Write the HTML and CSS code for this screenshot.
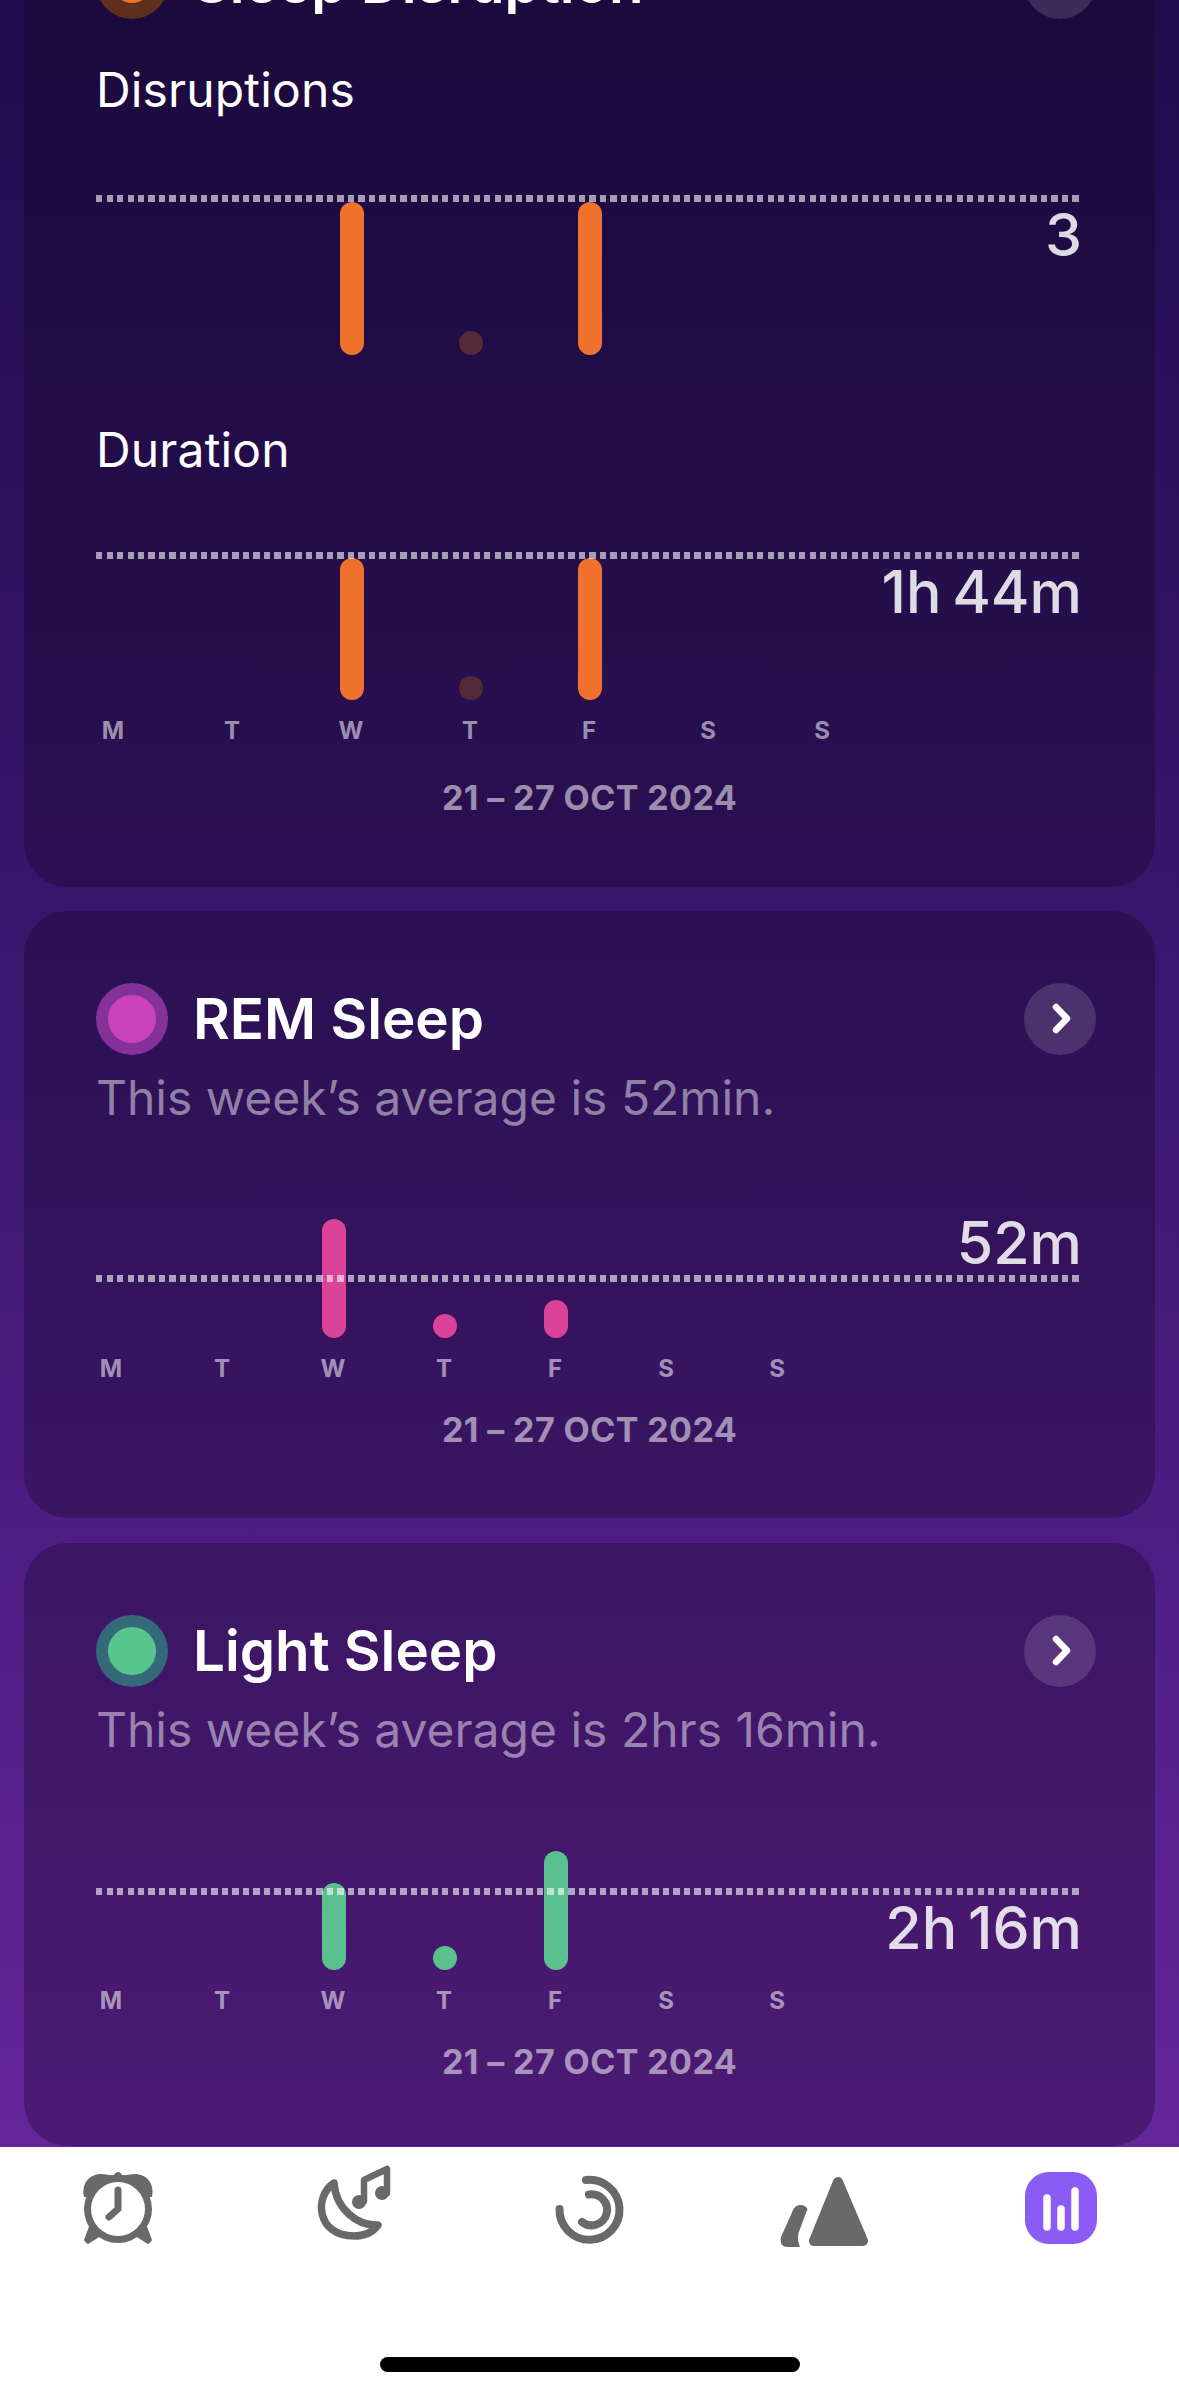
FILE: index.html
```html
<!DOCTYPE html>
<html lang="en">
<head>
    <meta charset="UTF-8">
    <meta name="viewport" content="width=device-width, initial-scale=1.0">
    <title>Sleep Report</title>
    <link rel="stylesheet" href="styles.css">
</head>
<body>
    <div class="screen">
        <main class="scroll">
            <!-- Sleep Disruption, scrolled partly out of view -->
            <section class="card card-first">
                <div class="card-head">
                    <span class="dot-icon dot-orange"></span>
                    <h2>Sleep Disruption</h2>
                    <span class="more"><svg viewBox="0 0 72 72"><path d="M32 24 43 35.500 32 47"/></svg></span>
                </div>
                <h3 class="chart-title">Disruptions</h3>
                <div class="plot plot-tall wide orange">
                    <div class="rule" style="top:0"><span class="value value-below">3</span></div>
                    <div class="bars">
                        <i></i><i></i><b style="height:153px"></b><b class="faint" style="height:24px"></b><b style="height:153px"></b><i></i><i></i>
                    </div>
                </div>
                <h3 class="chart-title chart-title-next">Duration</h3>
                <div class="plot plot-mid wide orange">
                    <div class="rule" style="top:0"><span class="value value-below">1h 44m</span></div>
                    <div class="bars">
                        <i></i><i></i><b style="height:142px"></b><b class="faint" style="height:24px"></b><b style="height:142px"></b><i></i><i></i>
                    </div>
                </div>
                <div class="days wide">
                    <span>M</span><span>T</span><span>W</span><span>T</span><span>F</span><span>S</span><span>S</span>
                </div>
                <p class="range range-first">21 – 27 OCT 2024</p>
            </section>

            <!-- REM Sleep -->
            <section class="card">
                <div class="card-head">
                    <span class="dot-icon dot-pink"></span>
                    <h2>REM Sleep</h2>
                    <span class="more"><svg viewBox="0 0 72 72"><path d="M32 24 43 35.500 32 47"/></svg></span>
                </div>
                <p class="summary">This week’s average is 52min.</p>
                <div class="plot pink">
                    <div class="rule" style="top:56px"><span class="value value-above">52m</span></div>
                    <div class="bars">
                        <i></i><i></i><b style="height:119px"></b><b style="height:24px"></b><b style="height:38px"></b><i></i><i></i>
                    </div>
                </div>
                <div class="days">
                    <span>M</span><span>T</span><span>W</span><span>T</span><span>F</span><span>S</span><span>S</span>
                </div>
                <p class="range">21 – 27 OCT 2024</p>
            </section>

            <!-- Light Sleep -->
            <section class="card card-last">
                <div class="card-head">
                    <span class="dot-icon dot-green"></span>
                    <h2>Light Sleep</h2>
                    <span class="more"><svg viewBox="0 0 72 72"><path d="M32 24 43 35.500 32 47"/></svg></span>
                </div>
                <p class="summary">This week’s average is 2hrs 16min.</p>
                <div class="plot green">
                    <div class="rule" style="top:37px"><span class="value value-below">2h 16m</span></div>
                    <div class="bars">
                        <i></i><i></i><b style="height:87px"></b><b style="height:24px"></b><b style="height:119px"></b><i></i><i></i>
                    </div>
                </div>
                <div class="days">
                    <span>M</span><span>T</span><span>W</span><span>T</span><span>F</span><span>S</span><span>S</span>
                </div>
                <p class="range">21 – 27 OCT 2024</p>
            </section>
        </main>

        <nav class="tabs">
            <svg class="tab" viewBox="0 0 90 90">
                <path class="solid" d="M11 34C8 20 17 11 28 11C34 11 38 13 41 12C43 8 47 8 49 12C52 13 56 11 62 11C73 11 82 20 79 34Z"/>
                <path class="solid foot" d="M16.500 65 12 77 15 80 26 73ZM73.500 65 78 77 75 80 64 73Z"/>
                <circle class="solid" cx="45" cy="46" r="34"/>
                <circle class="hole" cx="45" cy="46" r="27"/>
                <path class="line" stroke-width="7" d="M45 27V46L36 54"/>
            </svg>
            <svg class="tab" viewBox="0 0 90 90">
                <path class="line" stroke-width="7.500" d="M25 20C5 33 7 73 45 73C55 73 64 69 69 62C48 63 27 46 25 20Z"/>
                <path class="line" stroke-width="6.500" d="M55 38V17L78 6V30"/>
                <circle class="solid" cx="50" cy="39" r="7"/>
                <circle class="solid" cx="73" cy="30" r="7"/>
            </svg>
            <svg class="tab" viewBox="0 0 90 90">
                <path class="line" stroke-width="8" d="M42 17A30 30 0 1 1 15.500 46"/>
                <path class="line" stroke-width="8" d="M45 31.500A15.500 15.500 0 1 1 38 59"/>
            </svg>
            <svg class="tab" viewBox="0 0 90 90">
                <path class="solid" d="M13.500 46Q16 42 21 42Q25 42 27.500 46L18.500 70Q17 77 20 84H8Q-1 84 1 74Z"/>
                <path class="solid peak" d="M58 19 34 78H83Z"/>
            </svg>
            <svg class="tab" viewBox="0 0 90 90">
                <rect class="badge" x="9" y="9" width="72" height="72" rx="24"/>
                <path class="line line-white" stroke-width="7.500" d="M31 35V64M45 46V64M59 28V64"/>
            </svg>
        </nav>
        <div class="home-row"><span class="home-bar"></span></div>
    </div>
</body>
</html>
```

FILE: styles.css
```css
* {
    box-sizing: border-box;
}
body {
    font-family: Inter, "Liberation Sans", sans-serif;
    margin: 0;
    padding: 0;
    background: #fff;
    color: #fff;
}
.screen {
    width: 1179px;
    height: 2396px;
    display: flex;
    flex-direction: column;
    overflow: hidden;
}
.scroll {
    height: 2147px;
    flex: none;
    overflow: hidden;
    display: flex;
    flex-direction: column;
    gap: 25px;
    padding: 0 24px;
    background: linear-gradient(to bottom, #210d4e, #38176e 45%, #65259a);
}
.card {
    flex: none;
    height: 607px;
    padding: 72px 59px 0 72px;
    border-radius: 44px;
    background: rgba(16, 4, 28, 0.3);
}
.card-first {
    height: 1012px;
    margin-top: -125px;
    margin-bottom: -1px;
}
.card-last {
    height: 603px;
}
.card-head {
    display: flex;
    align-items: center;
    gap: 25px;
    height: 72px;
}
.card-head h2 {
    margin: 0;
    flex: 1;
    font-size: 56.5px;
    font-weight: 600;
    line-height: 72px;
}
.dot-icon {
    width: 72px;
    height: 72px;
    flex: none;
    border-radius: 50%;
    display: flex;
    align-items: center;
    justify-content: center;
}
.dot-icon::after {
    content: "";
    width: 48px;
    height: 48px;
    border-radius: 50%;
}
.dot-orange {
    background: #5e2f1b;
}
.dot-orange::after {
    width: 40px;
    height: 40px;
    background: #ee722e;
}
.dot-pink {
    background: #85319a;
}
.dot-pink::after {
    background: #cb43b8;
}
.dot-green {
    background: #34697a;
}
.dot-green::after {
    background: #58c48e;
}
.more {
    width: 72px;
    height: 72px;
    flex: none;
    border-radius: 50%;
    background: rgba(255, 255, 255, 0.14);
}
.more svg {
    display: block;
    width: 72px;
    height: 72px;
}
.more path {
    fill: none;
    stroke: #fff;
    stroke-width: 6.5;
    stroke-linecap: round;
    stroke-linejoin: round;
}
.chart-title {
    margin: 41px 0 0;
    font-size: 48px;
    font-weight: 400;
    line-height: 60px;
    letter-spacing: 0.15px;
}
.chart-title-next {
    margin-top: 65px;
}
.summary {
    margin: 13px 0 0;
    font-size: 48px;
    line-height: 60px;
    color: rgba(255, 255, 255, 0.47);
}
.plot {
    position: relative;
    width: 983px;
    height: 119px;
    margin-top: 91px;
}
.plot-tall {
    height: 160px;
    margin-top: 75px;
}
.plot-mid {
    height: 148px;
    margin-top: 72px;
}
.rule {
    position: absolute;
    z-index: 1;
    left: 0;
    right: 0;
    height: 7px;
    background: repeating-linear-gradient(90deg, rgba(255, 255, 255, 0.6) 0 6px, transparent 6px 10.5px);
}
.value {
    position: absolute;
    right: -3px;
    font-size: 59px;
    font-weight: 500;
    line-height: 60px;
    word-spacing: -5px;
    white-space: nowrap;
    color: rgba(255, 255, 255, 0.85);
}
.value-below {
    top: 10px;
}
.value-above {
    bottom: 9px;
}
.bars {
    display: grid;
    grid-template-columns: repeat(7, 30px);
    column-gap: 81px;
    align-items: end;
    height: 100%;
    padding-left: 1px;
}
.wide .bars,
.days.wide {
    grid-template-columns: repeat(7, 34px);
    column-gap: 85px;
}
.bars b {
    display: block;
    justify-self: center;
    width: 24px;
    border-radius: 12px;
}
.orange b {
    background: #ee722e;
}
.orange b.faint {
    background: #552a38;
}
.pink b {
    background: #db4398;
}
.green b {
    background: #5bc08f;
}
.days {
    display: grid;
    grid-template-columns: repeat(7, 30px);
    column-gap: 81px;
    margin-top: 16px;
    font-size: 24px;
    font-weight: 700;
    line-height: 30px;
    text-align: center;
    color: rgba(255, 255, 255, 0.55);
}
.days.wide span:last-child {
    margin-right: 10px;
}
.range {
    width: 987px;
    margin: 26px 0 0;
    font-size: 34px;
    font-weight: 700;
    line-height: 40px;
    letter-spacing: 0.4px;
    text-align: center;
    white-space: nowrap;
    color: rgba(255, 255, 255, 0.55);
}
.range-first {
    margin-top: 32px;
}
.tabs {
    display: grid;
    grid-template-columns: repeat(5, 1fr);
    justify-items: center;
    padding-top: 16px;
    background: #fff;
}
.tab {
    display: block;
    width: 90px;
    height: 90px;
    overflow: visible;
}
.solid {
    fill: #696969;
}
.foot {
    stroke: #696969;
    stroke-width: 2;
    stroke-linejoin: round;
}
.peak {
    stroke: #696969;
    stroke-width: 10;
    stroke-linejoin: round;
}
.hole {
    fill: #fff;
}
.line {
    fill: none;
    stroke: #696969;
    stroke-linecap: round;
    stroke-linejoin: round;
}
.line-white {
    stroke: #fff;
}
.badge {
    fill: #8a5cf5;
}
.home-row {
    display: flex;
    justify-content: center;
    padding-top: 104px;
    background: #fff;
}
.home-bar {
    width: 420px;
    height: 15px;
    border-radius: 8px;
    background: #000;
}
```
